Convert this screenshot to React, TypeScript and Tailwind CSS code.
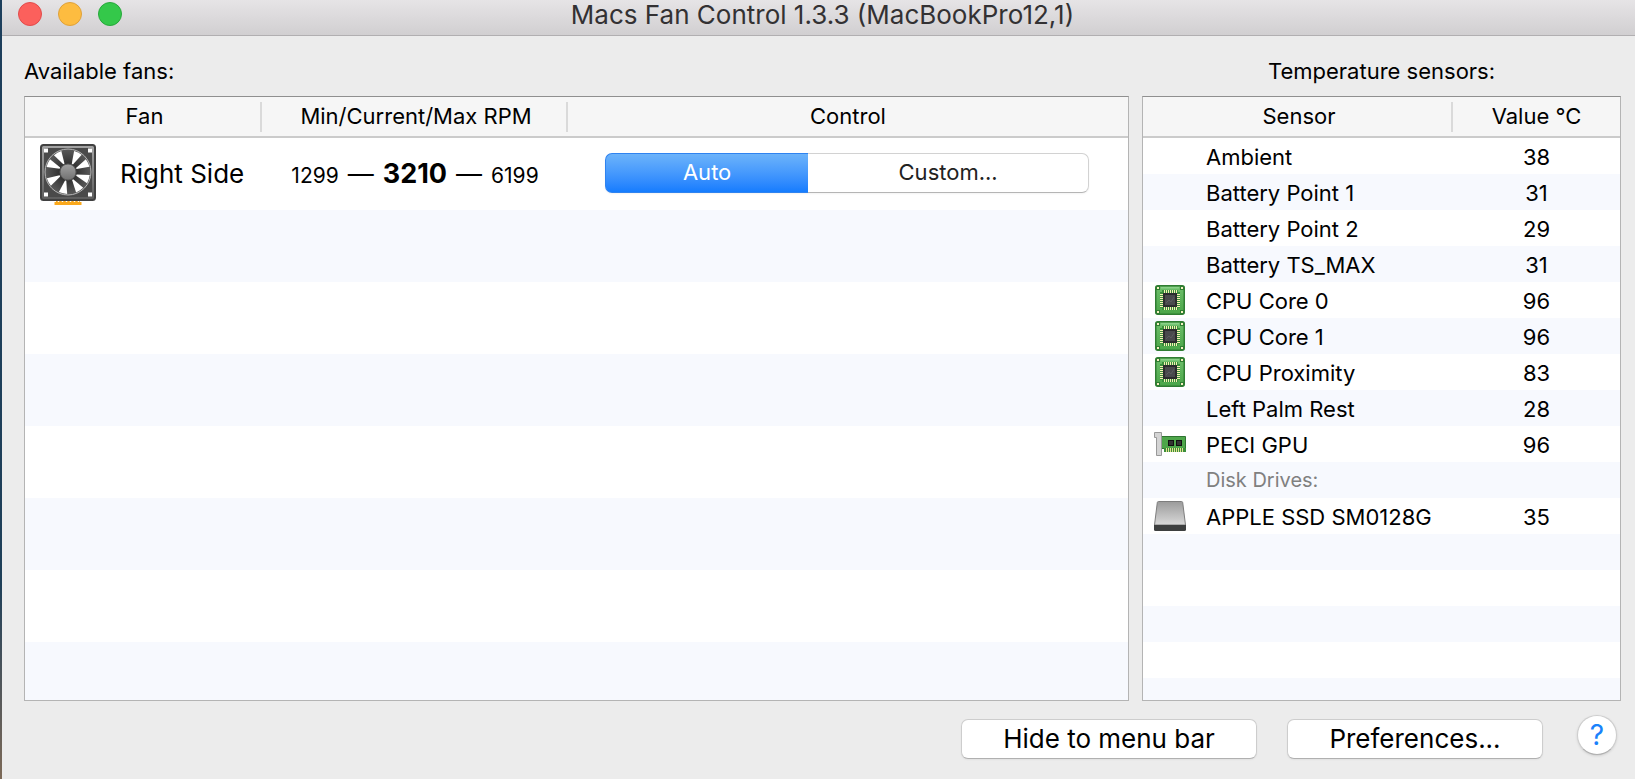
import { useState } from "react";

type SensorIcon = "cpu" | "gpu" | "disk";

interface Sensor {
  name: string;
  value?: number;
  icon?: SensorIcon;
  heading?: boolean;
}

const sensors: Sensor[] = [
  { name: "Ambient", value: 38 },
  { name: "Battery Point 1", value: 31 },
  { name: "Battery Point 2", value: 29 },
  { name: "Battery TS_MAX", value: 31 },
  { name: "CPU Core 0", value: 96, icon: "cpu" },
  { name: "CPU Core 1", value: 96, icon: "cpu" },
  { name: "CPU Proximity", value: 83, icon: "cpu" },
  { name: "Left Palm Rest", value: 28 },
  { name: "PECI GPU", value: 96, icon: "gpu" },
  { name: "Disk Drives:", heading: true },
  { name: "APPLE SSD SM0128G", value: 35, icon: "disk" },
];

const fans = [{ name: "Right Side", min: 1299, current: 3210, max: 6199 }];

export default function App() {
  return (
    <div className="flex min-h-screen bg-[#ececec] font-['Inter','Liberation_Sans',sans-serif] text-black">
      <div className="w-0.5 shrink-0 bg-linear-to-b from-[#1d3f5c] via-[#1f4059] via-75% to-[#7d6a58]" />
      <div className="flex min-w-0 flex-1 flex-col">
        <TitleBar />

        <main className="flex flex-1 gap-[13px] pr-[14px] pl-[22px]">
          <section className="flex min-w-0 flex-1 flex-col">
            <h2 className="pt-5 pb-2.5 text-[22px] leading-[30px]">Available fans:</h2>
            <FanTable />
          </section>
          <section className="flex w-[479px] shrink-0 flex-col">
            <h2 className="pt-5 pb-2.5 text-center text-[22px] leading-[30px]">Temperature sensors:</h2>
            <SensorTable />
          </section>
        </main>

        <footer className="flex items-start justify-end pt-3.5 pr-[18px] pb-5">
          <button className="mt-1 h-10 w-[296px] rounded-[7px] border border-[#cdcdcd] border-b-[#b0b0b0] bg-white text-[26px] leading-8 shadow-xs">
            Hide to menu bar
          </button>
          <button className="mt-1 ml-[30px] h-10 w-[256px] rounded-[7px] border border-[#cdcdcd] border-b-[#b0b0b0] bg-white text-[26px] leading-8 shadow-xs">
            Preferences...
          </button>
          <button
            aria-label="Help"
            className="ml-[34px] size-10 rounded-full border border-[#cdcdcd] border-b-[#b0b0b0] bg-white text-[28px] leading-8 text-[#1a82fb] shadow-sm"
          >
            ?
          </button>
        </footer>
      </div>
    </div>
  );
}

function TitleBar() {
  return (
    <header className="flex h-9 items-start border-b border-[#b1afb1] bg-linear-to-b from-[#e6e4e6] to-[#d1cfd1]">
      <div className="flex w-[134px] gap-4 pt-0.5 pl-4">
        <button aria-label="Close" className="size-6 rounded-full border border-[#e24b4b] bg-[#fc605c]" />
        <button aria-label="Minimize" className="size-6 rounded-full border border-[#dfa13a] bg-[#fdbc40]" />
        <button aria-label="Zoom" className="size-6 rounded-full border border-[#27a83b] bg-[#34c84a]" />
      </div>
      <h1 className="flex-1 text-center text-[26px] leading-[30px] text-[#333133]">
        Macs Fan Control 1.3.3 (MacBookPro12,1)
      </h1>
      <div className="w-[126px]" />
    </header>
  );
}

function HeaderCell({ children, last }: { children: string; last?: boolean }) {
  return (
    <th className="border-b-2 border-[#cbcbcb] bg-[#f6f6f6] p-0 pt-[5px] pb-1 font-normal">
      <div className={last ? "h-[30px] leading-7" : "h-[30px] border-r-2 border-[#dadada] pl-1 leading-7"}>
        {children}
      </div>
    </th>
  );
}

function FanTable() {
  return (
    <div className="flex-1 border border-[#b4b4b4] border-t-[#8f8f8f] bg-[linear-gradient(#fff_50%,#f7f9fe_50%)] bg-[length:100%_144px] bg-[position:0_41px]">
      <table className="w-full table-fixed border-separate border-spacing-0 text-[22px]">
        <colgroup>
          <col className="w-[237px]" />
          <col className="w-[306px]" />
          <col />
        </colgroup>
        <thead>
          <tr>
            <HeaderCell>Fan</HeaderCell>
            <HeaderCell>Min/Current/Max RPM</HeaderCell>
            <HeaderCell last>Control</HeaderCell>
          </tr>
        </thead>
        <tbody>
          {fans.map((fan) => (
            <tr key={fan.name} className="h-[72px]">
              <td className="p-0 pt-0.5">
                <div className="flex items-center gap-6 pl-[15px]">
                  <FanIcon />
                  <span className="pb-0.5 text-[26px] leading-8">{fan.name}</span>
                </div>
              </td>
              <td className="p-0 pt-0.5">
                <div className="flex items-baseline justify-center gap-[9px] text-[21px] leading-8">
                  <span>{fan.min}</span>
                  <span className="text-[26px]">—</span>
                  <b className="text-[27px] font-bold">{fan.current}</b>
                  <span className="text-[26px]">—</span>
                  <span>{fan.max}</span>
                </div>
              </td>
              <td className="pt-0 pr-[39px] pb-0.5 pl-[37px]">
                <FanControl />
              </td>
            </tr>
          ))}
        </tbody>
      </table>
    </div>
  );
}

function FanControl() {
  const [mode, setMode] = useState<"auto" | "custom">("auto");
  const on = "border-[#2f83f0] bg-linear-to-b from-[#6cb3fa] to-[#147cfe] text-white";
  const off = "border-[#d2d2d2] border-b-[#b5b5b5] bg-white text-[#222]";

  return (
    <div className="flex h-10 rounded-[7px] text-[22px] leading-7 shadow-xs">
      <button
        aria-pressed={mode === "auto"}
        onClick={() => setMode("auto")}
        className={`w-[42%] rounded-l-[7px] border border-r-0 pb-0.5 ${mode === "auto" ? on : off}`}
      >
        Auto
      </button>
      <button
        aria-pressed={mode === "custom"}
        onClick={() => setMode("custom")}
        className={`flex-1 rounded-r-[7px] border border-l-0 pb-0.5 ${mode === "custom" ? on : off}`}
      >
        Custom...
      </button>
    </div>
  );
}

function SensorTable() {
  return (
    <div className="flex-1 border border-[#b4b4b4] border-t-[#8f8f8f] bg-[linear-gradient(#fff_50%,#f7f9fe_50%)] bg-[length:100%_72px] bg-[position:0_41px]">
      <table className="w-full table-fixed border-separate border-spacing-0 text-[22px]">
        <colgroup>
          <col />
          <col className="w-[167px]" />
        </colgroup>
        <thead>
          <tr>
            <HeaderCell>Sensor</HeaderCell>
            <HeaderCell last>Value °C</HeaderCell>
          </tr>
        </thead>
        <tbody>
          {sensors.map((sensor) => (
            <tr key={sensor.name} className="h-9">
              <td className="p-0">
                <div className="flex h-9 items-center pt-0.5 pl-[11px]">
                  <span className="flex w-[52px] pb-0.5">
                    {sensor.icon === "cpu" && <CpuIcon />}
                    {sensor.icon === "gpu" && <GpuIcon />}
                    {sensor.icon === "disk" && <DiskIcon />}
                  </span>
                  <span className={sensor.heading ? "pb-0.5 text-[20px] leading-7 text-[#808080]" : "leading-7"}>
                    {sensor.name}
                  </span>
                </div>
              </td>
              <td className="p-0 pt-0.5 text-center leading-7">{sensor.value}</td>
            </tr>
          ))}
        </tbody>
      </table>
    </div>
  );
}

/* Icons */

// angle of each gap between the blades, clockwise from the top
const bladeGaps = [-28, 28, 66, 110, 148, 194, 243, 295];

function FanIcon() {
  return (
    <svg width="56" height="62" viewBox="0 0 56 62" aria-hidden="true">
      <defs>
        <linearGradient id="fan-rim" x1="0" y1="0" x2="0" y2="1">
          <stop offset="0" stopColor="#a5a5a5" />
          <stop offset="1" stopColor="#5c5c5c" />
        </linearGradient>
        <linearGradient id="fan-hub" x1="0" y1="0" x2="0" y2="1">
          <stop offset="0" stopColor="#a2a2a2" />
          <stop offset="1" stopColor="#717171" />
        </linearGradient>
        <radialGradient id="fan-blades">
          <stop offset="0.300" stopColor="#2e2e2e" />
          <stop offset="1" stopColor="#5a5a5a" />
        </radialGradient>
      </defs>
      <path d="M16 55h24v3h1.500v3h-27v-3H16z" fill="#fba91c" />
      <path d="M18.500 55v3M22.500 55v3M26.500 55v3M30.500 55v3M34.500 55v3M38.500 55v3" stroke="#fff" strokeWidth="1.500" />
      <rect x="1" y="1" width="54" height="55" rx="2.500" fill="url(#fan-rim)" stroke="#414141" strokeWidth="2" />
      <rect x="4" y="4" width="48" height="49" rx="1" fill="#4a4a4a" />
      <g fill="#fff">
        <rect x="4" y="4.500" width="4" height="4" />
        <rect x="48" y="4.500" width="4" height="4" />
        <rect x="4" y="48.500" width="4" height="4" />
        <rect x="48" y="48.500" width="4" height="4" />
      </g>
      <circle cx="28" cy="28" r="23" fill="url(#fan-blades)" stroke="#b5b5b5" />
      {bladeGaps.map((angle) => (
        <path
          key={angle}
          d="M27.500 19 L23.500 6.500 A22 22 0 0 1 32 6.300 L28.800 19 Z"
          fill="#fff"
          transform={`rotate(${angle} 28 28)`}
        />
      ))}
      <circle cx="28" cy="28" r="8" fill="url(#fan-hub)" stroke="#5a5a5a" />
    </svg>
  );
}

function CpuIcon() {
  return (
    <svg width="30" height="30" viewBox="0 0 30 30" className="ml-px" aria-hidden="true">
      <defs>
        <linearGradient id="cpu-board" x1="0" y1="0" x2="0" y2="1">
          <stop offset="0" stopColor="#6fc06c" />
          <stop offset="1" stopColor="#4aa548" />
        </linearGradient>
      </defs>
      <rect x=".75" y=".75" width="28.500" height="28.500" rx="2" fill="url(#cpu-board)" stroke="#2f7d32" strokeWidth="1.500" />
      <path d="M6 2h18v1.500H6z" fill="#8ad088" />
      <path d="M7 5h16v2h2v16h-2v2H7v-2H5V7h2z" fill="#3a8f3c" />
      <path d="M9.500 5v20M11.500 5v20M13.500 5v20M15.500 5v20M17.500 5v20M19.500 5v20M21.500 5v20" stroke="#f6f0b4" />
      <path d="M5 9.500h20M5 11.500h20M5 13.500h20M5 15.500h20M5 17.500h20M5 19.500h20M5 21.500h20" stroke="#f6f0b4" />
      <rect x="8" y="8" width="14" height="14" fill="#2c2c2e" />
      <rect x="10" y="10" width="10" height="10" fill="#4a4a4d" />
      <path d="M11 18l3-3 2 2 3-5" stroke="#5b5b5e" fill="none" />
      <g fill="#f5f0c0" stroke="#2f7d32">
        <rect x="1.500" y="1.500" width="3" height="3" />
        <rect x="25.500" y="1.500" width="3" height="3" />
        <rect x="1.500" y="25.500" width="3" height="3" />
        <rect x="25.500" y="25.500" width="3" height="3" />
      </g>
    </svg>
  );
}

function GpuIcon() {
  return (
    <svg width="32" height="24" viewBox="0 0 32 24" aria-hidden="true">
      <path d="M7.500 4.500h24v15h-21v-3h-3z" fill="#4ea64a" stroke="#2f7431" />
      <path d="M10 16h22v4H10z" fill="#3b8f3b" />
      <path d="M12.500 16v4M14.500 16v4M16.500 16v4M18.500 16v4M20.500 16v4M22.500 16v4M24.500 16v4M26.500 16v4M28.500 16v4" stroke="#e3e08f" />
      <path d="M.5.5h7v23h-5v-18h-2z" fill="#d4d4d4" stroke="#999" />
      <rect x="14.500" y="8.500" width="5" height="5" fill="#333" stroke="#111" />
      <rect x="22.500" y="8.500" width="5" height="5" fill="#333" stroke="#111" />
    </svg>
  );
}

function DiskIcon() {
  return (
    <svg width="32" height="30" viewBox="0 0 32 30" aria-hidden="true">
      <defs>
        <linearGradient id="disk-top" x1="0" y1="0" x2="0" y2="1">
          <stop offset="0" stopColor="#9b9b9b" />
          <stop offset="1" stopColor="#d9d9d9" />
        </linearGradient>
      </defs>
      <path d="M4.500.5h23q1 0 1.200 1L31.500 24H.5L3.300 1.500q.2-1 1.200-1z" fill="url(#disk-top)" stroke="#7d7d7d" />
      <path d="M0 24h32v4.500q0 1.500-1.500 1.500h-29Q0 30 0 28.500z" fill="#3d3f3f" />
    </svg>
  );
}
